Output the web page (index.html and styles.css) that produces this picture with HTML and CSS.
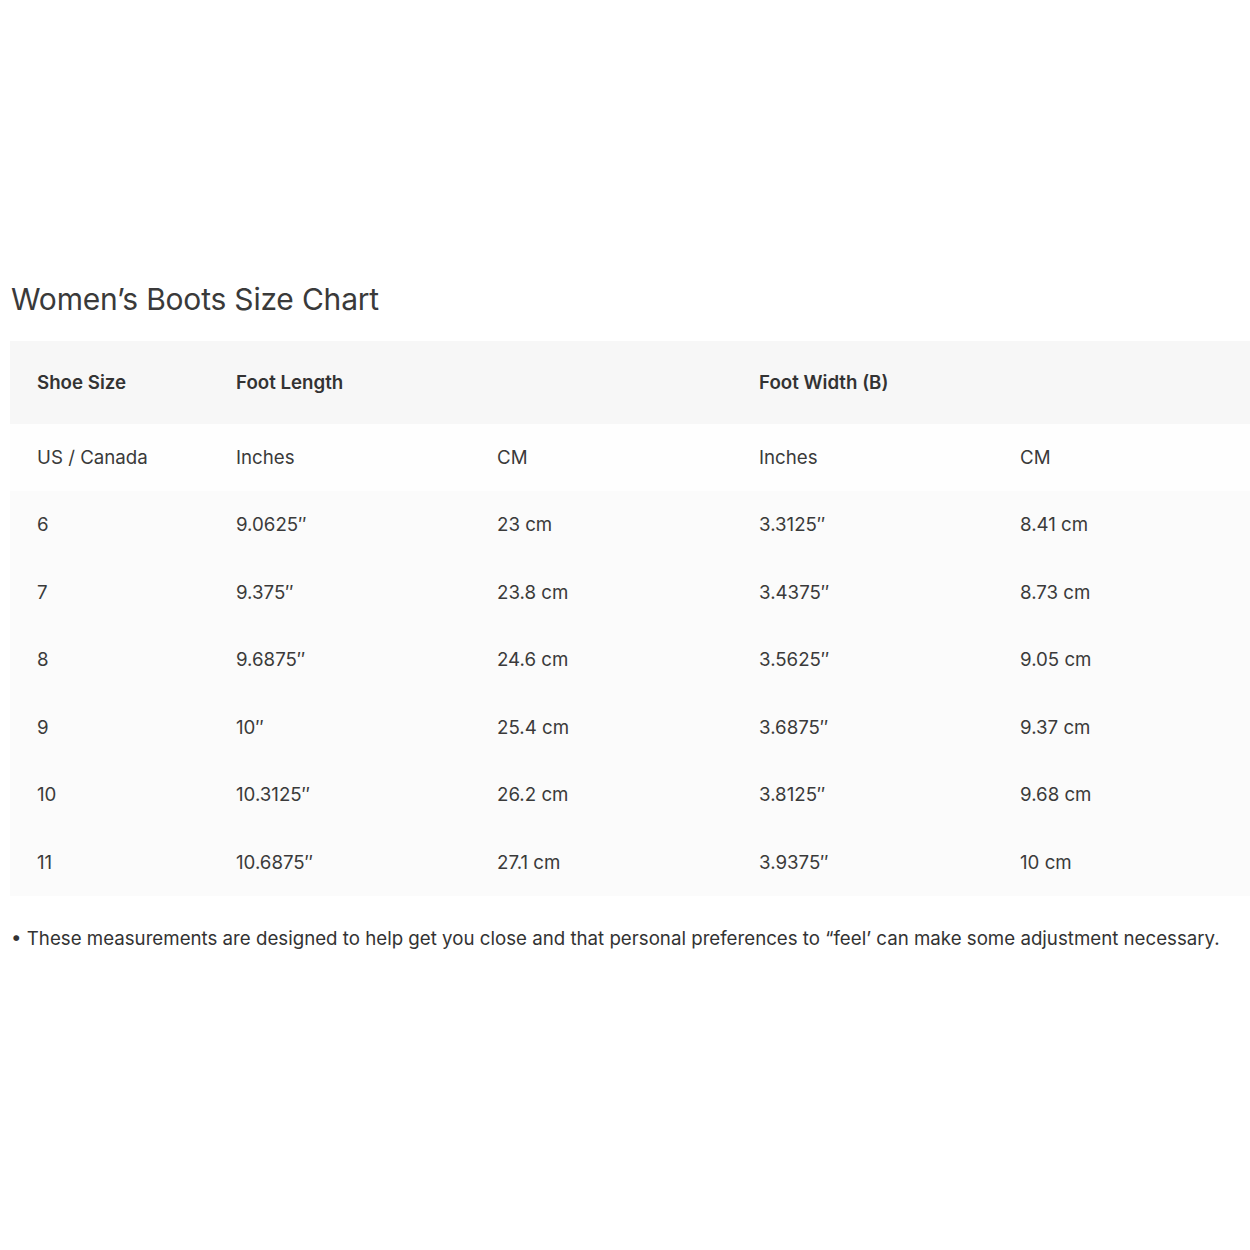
FILE: index.html
```html
<!DOCTYPE html>
<html lang="en">
<head>
<meta charset="utf-8">
<title>Women's Boots Size Chart</title>
<link rel="stylesheet" href="styles.css">
</head>
<body>
<main class="page">
  <h2 class="title">Women’s Boots Size Chart</h2>
  <table class="chart">
    <colgroup>
      <col class="c1"><col class="c2"><col class="c3"><col class="c4"><col class="c5">
    </colgroup>
    <thead>
      <tr class="head">
        <th>Shoe Size</th>
        <th colspan="2">Foot Length</th>
        <th colspan="2">Foot Width (B)</th>
      </tr>
    </thead>
    <tbody>
      <tr class="sub"><td>US / Canada</td><td>Inches</td><td>CM</td><td>Inches</td><td>CM</td></tr>
      <tr><td>6</td><td>9.0625″</td><td>23 cm</td><td>3.3125″</td><td>8.41 cm</td></tr>
      <tr><td>7</td><td>9.375″</td><td>23.8 cm</td><td>3.4375″</td><td>8.73 cm</td></tr>
      <tr><td>8</td><td>9.6875″</td><td>24.6 cm</td><td>3.5625″</td><td>9.05 cm</td></tr>
      <tr><td>9</td><td>10″</td><td>25.4 cm</td><td>3.6875″</td><td>9.37 cm</td></tr>
      <tr><td>10</td><td>10.3125″</td><td>26.2 cm</td><td>3.8125″</td><td>9.68 cm</td></tr>
      <tr><td>11</td><td>10.6875″</td><td>27.1 cm</td><td>3.9375″</td><td>10 cm</td></tr>
    </tbody>
  </table>
  <p class="note">• These measurements are designed to help get you close and that personal preferences to “feel’ can make some adjustment necessary.</p>
</main>
</body>
</html>
```

FILE: styles.css
```css
html, body {
  margin: 0;
  padding: 0;
  background: #ffffff;
}
body {
  font-family: Inter, "Noto Sans", sans-serif;
  color: #333333;
}
.page {
  padding: 281px 0 0 10px;
}
.title {
  margin: 0 0 23px 1px;
  font-size: 30px;
  font-weight: 400;
  line-height: 37px;
  color: #3a3a3a;
  letter-spacing: -0.2px;
}
.chart {
  width: 1240px;
  border-collapse: collapse;
  table-layout: fixed;
  font-size: 18.7px;
}
.c1 { width: 199px; }
.c2 { width: 261px; }
.c3 { width: 262px; }
.c4 { width: 261px; }
.c5 { width: 257px; }
.chart th,
.chart td {
  text-align: left;
  padding: 0 0 0 27px;
  height: 67.5px;
  vertical-align: middle;
  color: #3a3a3a;
}
.chart th {
  height: 82.5px;
  font-weight: 600;
  background: #f7f7f7;
  color: #333333;
}
.chart tbody tr {
  background: #fbfbfb;
}
.chart tbody tr.sub {
  background: #fefefe;
}
.note {
  margin: 31px 0 0 1px;
  font-size: 18.7px;
  line-height: 24px;
  color: #333333;
}
```
